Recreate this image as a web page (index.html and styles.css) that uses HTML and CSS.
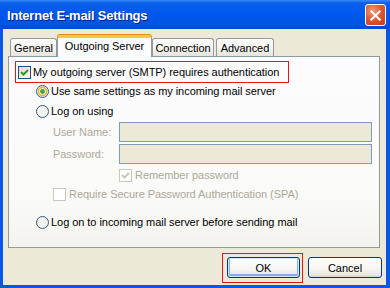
FILE: index.html
```html
<!DOCTYPE html>
<html lang="en">
<head>
    <meta charset="UTF-8">
    <meta name="viewport" content="width=device-width, initial-scale=1.0">
    <title>Internet E-mail Settings</title>
    <link rel="stylesheet" href="styles.css">
</head>
<body>
    <div class="window">
        <div class="titlebar">
            <span class="title">Internet E-mail Settings</span>
            <button class="close" aria-label="Close">
                <svg width="21" height="21" viewBox="0 0 21 21">
                    <path d="M6 6 L15 15 M15 6 L6 15" stroke="#fff" stroke-width="2.4" stroke-linecap="square"/>
                </svg>
            </button>
        </div>

        <div class="client">
            <div class="tabs">
                <div class="tab general">General</div>
                <div class="tab active">Outgoing Server</div>
                <div class="tab connection">Connection</div>
                <div class="tab advanced">Advanced</div>
            </div>

            <div class="panel">
                <div class="auth">
                    <span class="checkbox">
                        <svg width="11" height="11" viewBox="0 0 11 11"><path d="M2 5 L4.5 7.5 L9 3" fill="none" stroke="#21a121" stroke-width="2"/></svg>
                    </span>
                    <span>My outgoing server (SMTP) requires authentication</span>
                </div>

                <div class="option first">
                    <span class="radio">
                        <svg width="13" height="13" viewBox="0 0 13 13">
                            <circle cx="6.5" cy="6.5" r="6" fill="#f4f3ee" stroke="#2f5a8a"/>
                            <circle cx="6.5" cy="6.5" r="4.1" fill="none" stroke="#f5b440" stroke-width="1.6"/>
                            <circle cx="6.5" cy="6.5" r="2.4" fill="#3aa83a"/>
                        </svg>
                    </span>
                    <span>Use same settings as my incoming mail server</span>
                </div>

                <div class="option second">
                    <span class="radio">
                        <svg width="13" height="13" viewBox="0 0 13 13">
                            <circle cx="6.5" cy="6.5" r="6" fill="#f4f3ee" stroke="#2f5a8a"/>
                        </svg>
                    </span>
                    <span>Log on using</span>
                </div>

                <div class="creds">
                    <div class="field">
                        <span class="field-label">User Name:</span>
                        <span class="input"></span>
                    </div>
                    <div class="field password">
                        <span class="field-label">Password:</span>
                        <span class="input"></span>
                    </div>
                    <div class="option remember disabled">
                        <span class="checkbox">
                            <svg width="11" height="11" viewBox="0 0 11 11"><path d="M2 5 L4.5 7.5 L9 3" fill="none" stroke="#cac8bb" stroke-width="2"/></svg>
                        </span>
                        <span>Remember password</span>
                    </div>
                    <div class="option spa disabled">
                        <span class="checkbox"></span>
                        <span>Require Secure Password Authentication (SPA)</span>
                    </div>
                </div>

                <div class="option before-send">
                    <span class="radio">
                        <svg width="13" height="13" viewBox="0 0 13 13">
                            <circle cx="6.5" cy="6.5" r="6" fill="#f4f3ee" stroke="#2f5a8a"/>
                        </svg>
                    </span>
                    <span>Log on to incoming mail server before sending mail</span>
                </div>
            </div>

            <div class="actions">
                <div class="highlight">
                    <button class="btn default">OK</button>
                </div>
                <button class="btn cancel">Cancel</button>
            </div>
        </div>
    </div>
</body>
</html>
```

FILE: styles.css
```css
* {
    margin: 0;
    padding: 0;
    box-sizing: border-box;
}

body {
    font-family: "Liberation Sans", Arial, sans-serif;
    font-size: 11px;
    letter-spacing: -0.05px;
    color: #000;
    background: #fff;
}

.window {
    width: 390px;
    height: 288px;
    background: #0a56e6;
    display: flex;
    flex-direction: column;
}

.titlebar {
    height: 29px;
    display: flex;
    align-items: center;
    justify-content: space-between;
    padding: 0 4px 0 7px;
    background: linear-gradient(to bottom, #3a8cfb 0%, #0a5fea 10%, #0058ee 45%, #0054e3 85%, #0046d4 100%);
}

.title {
    color: #fff;
    font-family: "Liberation Sans", Arial, sans-serif;
    font-weight: bold;
    font-size: 13px;
    letter-spacing: -0.2px;
    text-shadow: 1px 1px 0 #0a1e8c;
    margin-top: 1px;
}

.close {
    width: 21px;
    height: 22px;
    border: 1px solid #fff;
    border-radius: 3px;
    background: radial-gradient(circle at 35% 30%, #f29a7e 0%, #e05a35 45%, #c43a14 100%);
    display: flex;
    align-items: center;
    justify-content: center;
    margin-top: 1px;
}

.client {
    flex: 1;
    margin: 0 4px 3px 3px;
    background: #ece9d8;
    padding: 6px 4px 0 5px;
}

/* tab strip */

.tabs {
    display: flex;
    align-items: flex-end;
    height: 21px;
    padding-left: 2px;
    position: relative;
    z-index: 1;
}

.tab {
    height: 18px;
    display: flex;
    align-items: center;
    justify-content: center;
    border: 1px solid #919b9c;
    border-bottom: none;
    border-radius: 3px 3px 0 0;
    background: linear-gradient(to bottom, #fefefe, #f4f3ee 60%, #e6e4dc);
}

.tab.general {
    width: 47px;
}

.tab.active {
    width: 95px;
    height: 22px;
    margin-bottom: -1px;
    padding-bottom: 3px;
    background: #fcfcfe;
    border-top: 3px solid #ffc83c;
    box-shadow: 0 -1px 0 #e68b2c;
}

.tab.connection {
    width: 62px;
}

.tab.advanced {
    width: 58px;
    margin-left: 2px;
}

.panel {
    height: 192px;
    margin-right: 2px;
    border: 1px solid #919b9c;
    background: linear-gradient(to bottom, #fcfcfe 0%, #fafaf8 75%, #f4f3ee 100%);
    padding: 4px 0 0 6px;
}

/* checkbox and radio rows */

.auth {
    width: 274px;
    height: 22px;
    border: 1px solid #e8141c;
    display: flex;
    align-items: center;
    gap: 2px;
    padding-left: 2px;
}

.checkbox {
    width: 13px;
    height: 13px;
    border: 1px solid #1c5180;
    background: linear-gradient(135deg, #dcdcd7, #fbfbf9);
    display: flex;
    align-items: center;
    justify-content: center;
    flex-shrink: 0;
}

.radio {
    width: 13px;
    height: 13px;
    display: flex;
    flex-shrink: 0;
}

.option {
    height: 16px;
    display: flex;
    align-items: center;
    gap: 2px;
    margin-left: 21px;
}

.option.second {
    margin-top: 4px;
}

.option.before-send {
    margin-top: 12px;
}

.creds {
    margin-left: 38px;
}

.field {
    display: flex;
    align-items: center;
    margin-top: 3px;
    color: #aca899;
}

.field.password {
    margin-top: 2px;
}

.field-label {
    width: 66px;
}

.input {
    width: 253px;
    height: 20px;
    border: 1px solid #7f9db9;
    background: #ece9d8;
}

.disabled {
    color: #aca899;
}

.disabled .checkbox {
    border-color: #cac8bb;
    background: #fff;
}

.option.remember {
    margin: 3px 0 0 66px;
    gap: 3px;
}

.option.spa {
    margin: 3px 0 0 0;
    gap: 3px;
}

/* dialog buttons */

.actions {
    display: flex;
    justify-content: flex-end;
    align-items: flex-start;
    gap: 5px;
    margin-top: 5px;
}

.highlight {
    border: 1px solid #e8141c;
    padding: 3px 2px 4px 4px;
}

.btn {
    width: 73px;
    height: 21px;
    border: 1px solid #003c74;
    border-radius: 3px;
    background: linear-gradient(to bottom, #ffffff 0%, #f5f4ef 60%, #e9e7de 90%, #d6d0c5 100%);
    font-family: "Liberation Sans", Arial, sans-serif;
    font-size: 11px;
    color: #000;
}

.btn.default {
    box-shadow: inset 0 0 0 1px #cee7ff, inset 0 -1px 0 2px #88aee9;
}

.btn.cancel {
    width: 74px;
    margin-top: 4px;
}
```
